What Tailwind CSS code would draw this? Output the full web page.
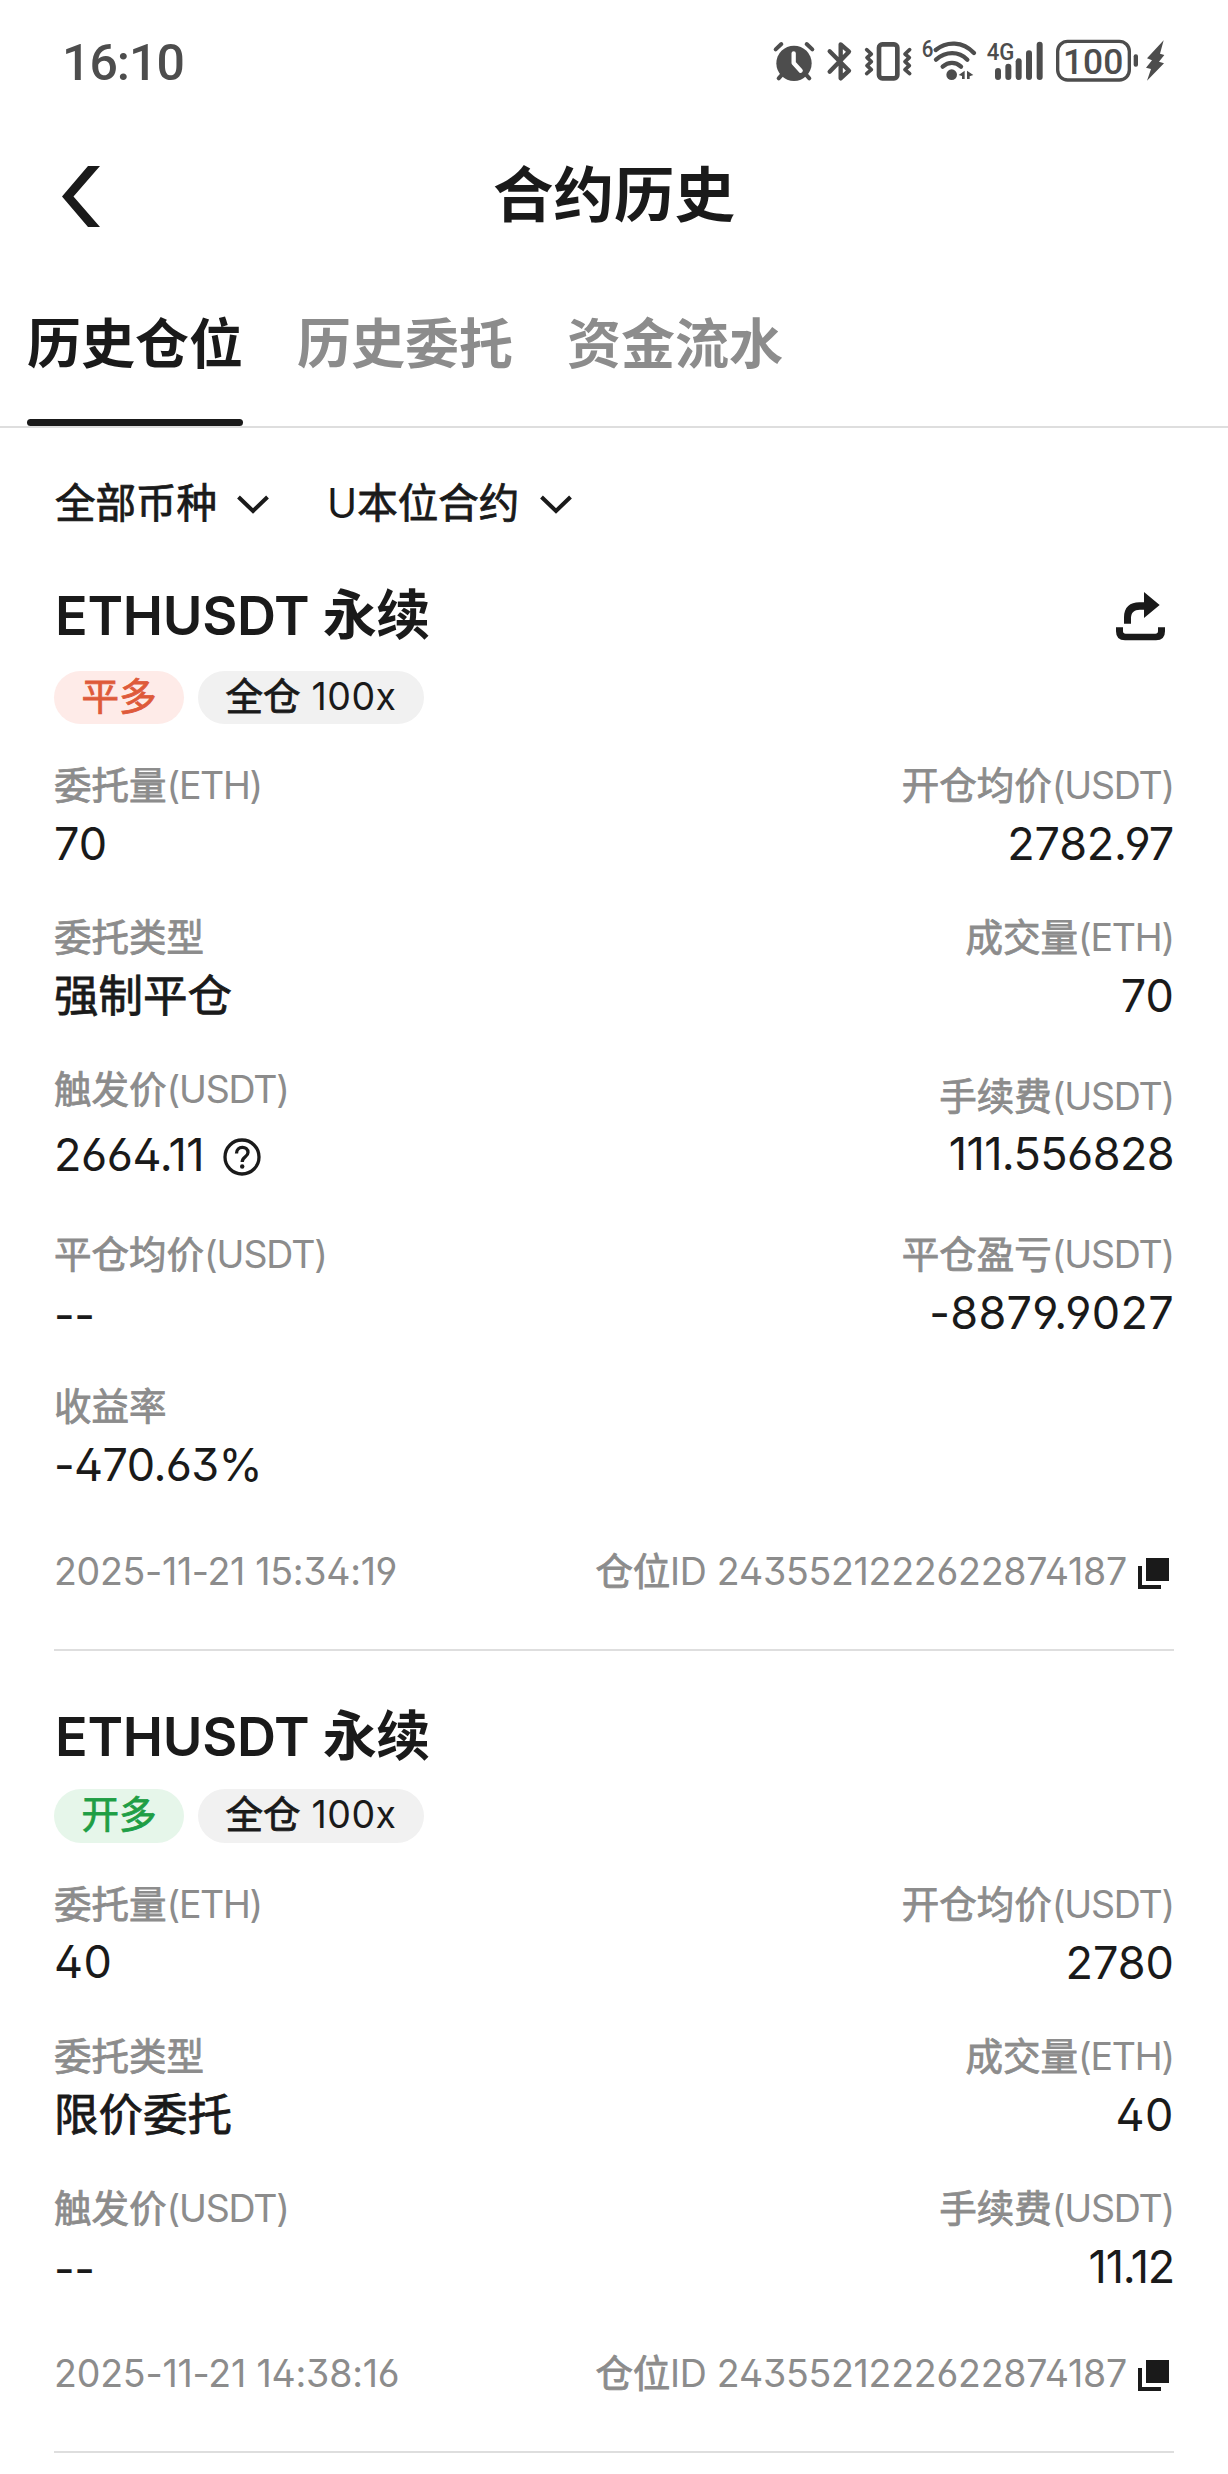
<!DOCTYPE html>
<html lang="zh-CN">
<head>
  <meta charset="UTF-8">
  <meta name="viewport" content="width=device-width, initial-scale=1.0">
  <title>合约历史</title>
  <script src="https://cdn.jsdelivr.net/npm/@tailwindcss/browser@4"></script>
</head>
<body class="bg-white text-[#1a1a1a] font-['Inter','Noto_Sans_CJK_SC',sans-serif] [font-feature-settings:'ss01']">

  <!-- Status bar -->
  <div class="h-[124px] flex items-center justify-between pl-[62px] pr-[48px] text-[#4d4d4d]">
    <div class="pt-[2px] font-[Roboto] font-medium text-[50px] leading-[60px] tracking-[-1px]">16:10</div>
    <svg class="w-[420px] h-[75px]" viewBox="0 0 1260 225" fill="currentColor">
      <!-- alarm -->
      <circle cx="102" cy="115" r="53"/>
      <path d="M47 73L64 57M140 57L157 73M66 149L56 160M138 149L148 160" fill="none" stroke="currentColor" stroke-width="12" stroke-linecap="round"/>
      <path d="M101 85V114L122 137" fill="none" stroke="#fff" stroke-width="13" stroke-linecap="round" stroke-linejoin="round"/>
      <!-- bluetooth -->
      <path d="M209 79L267 137L242 160V58L267 80L209 140" fill="none" stroke="currentColor" stroke-width="13" stroke-linecap="round" stroke-linejoin="round"/>
      <!-- vibrate -->
      <rect x="357" y="58" width="55" height="102" rx="10" fill="none" stroke="currentColor" stroke-width="14"/>
      <path d="M320 74L334 87L321 98L334 110L321 122L334 134L320 146M449 74L435 87L448 98L435 110L448 122L435 134L449 146" fill="none" stroke="currentColor" stroke-width="11" stroke-linecap="round" stroke-linejoin="round"/>
      <!-- wifi -->
      <text x="485" y="97" font-family="Roboto" font-size="70" font-weight="500" textLength="35" lengthAdjust="spacingAndGlyphs">6</text>
      <path d="M527 75C560 48 608 48 642 84M528 104C558 78 596 78 622 104M548 125C565 110 587 110 603 125" fill="none" stroke="currentColor" stroke-width="13" stroke-linecap="round"/>
      <circle cx="575" cy="149" r="16"/>
      <path d="M596 150L614 137V162H606V153ZM621 137L640 150L629 154V162H621Z"/>
      <!-- cellular -->
      <text x="680" y="104" font-family="Roboto" font-size="74" font-weight="500" textLength="83" lengthAdjust="spacingAndGlyphs">4G</text>
      <rect x="705" y="129" width="18" height="36" rx="9"/>
      <rect x="736" y="116" width="18" height="49" rx="9"/>
      <rect x="767" y="100" width="18" height="65" rx="9"/>
      <rect x="798" y="76" width="18" height="89" rx="9"/>
      <rect x="830" y="50" width="18" height="115" rx="9"/>
      <!-- battery -->
      <rect x="893" y="49" width="215" height="116" rx="30" fill="none" stroke="currentColor" stroke-width="10"/>
      <text x="909" y="146" font-family="Roboto" font-size="106" font-weight="500" textLength="181" lengthAdjust="spacingAndGlyphs">100</text>
      <rect x="1121" y="88" width="13" height="37" rx="6"/>
      <path d="M1211 46L1161 100L1176 106L1158 128L1173 132L1161 167L1212 115L1197 110L1213 90L1200 86Z"/>
    </svg>
  </div>

  <!-- Header -->
  <div class="h-[142px] grid grid-cols-3 items-center px-[62px]">
    <svg class="w-[38px] h-[61px] mt-[2px]" viewBox="0 0 38 61" fill="currentColor"><path d="M26 0H38L11.500 30.500L38 61H26L0 30.500Z"/></svg>
    <h1 class="text-center text-[60.500px] leading-[72px] font-bold">合约历史</h1>
  </div>

  <!-- Tabs -->
  <div class="h-[162px] flex gap-[54px] px-[27px] border-b-2 border-[#dedede] text-[54px] leading-[64px] font-bold text-[#8c8c8c]">
    <div class="h-[160px] flex flex-col justify-between pt-[47px] text-[#1a1a1a]">
      <span>历史仓位</span>
      <span class="h-[7px] rounded-full bg-[#1a1a1a]"></span>
    </div>
    <div class="pt-[47px]">历史委托</div>
    <div class="pt-[47px]">资金流水</div>
  </div>

  <!-- Filters -->
  <div class="mt-[46px] h-[60px] flex items-center px-[55px] text-[40.500px] leading-[60px]">
    <span class="[-webkit-text-stroke:0.8px]">全部币种</span>
    <svg class="ml-[20px] mt-[2px] w-[32px] h-[20px]" viewBox="0 0 32 20" fill="none" stroke="currentColor" stroke-width="4"><path d="M1.500 2L16 16L30.500 2"/></svg>
    <span class="ml-[58px]">U<span class="[-webkit-text-stroke:0.8px]">本位合约</span></span>
    <svg class="ml-[21px] mt-[2px] w-[32px] h-[20px]" viewBox="0 0 32 20" fill="none" stroke="currentColor" stroke-width="4"><path d="M1.500 2L16 16L30.500 2"/></svg>
  </div>

  <!-- Position 1 -->
  <div class="mx-[54px] mt-[50px] border-b-2 border-[#dedede] pb-[51px]">
    <div class="flex items-center justify-between pl-px pr-[9px]">
      <h2 class="text-[54px] leading-[64px] font-semibold tracking-[-0.3px]">ETHUSDT 永续</h2>
      <svg class="w-[49px] h-[49px] mt-px" viewBox="0 0 147 147" fill="currentColor">
        <path d="M84 0L131 39L84 78V53H72C54 53 45 62 45 78V95H24V76C24 46 42 31 70 31H84Z"/>
        <path d="M0 106H21V117Q21 125 29 125H118Q126 125 126 117V106H147V118Q147 145 120 145H27Q0 145 0 118Z"/>
      </svg>
    </div>
    <div class="flex gap-[14px] mt-[23px] text-[37.500px] leading-[52px]">
      <span class="w-[130px] h-[53px] rounded-full bg-[#feebe8] text-[#de5a3a] text-center [-webkit-text-stroke:0.8px]">平多</span>
      <span class="w-[226px] h-[53px] rounded-full bg-[#f1f1f1] text-center tracking-[0.5px]"><span class="[-webkit-text-stroke:0.8px] tracking-normal">全仓</span> 100x</span>
    </div>

    <div class="mt-[36px] grid grid-cols-2 gap-y-[36px]">
      <div>
        <div class="text-[37.500px] leading-[52px] tracking-[-1.3px] text-[#8c8c8c]"><span class="[-webkit-text-stroke:0.8px] tracking-normal">委托量</span>(ETH)</div>
        <div class="text-[45px] leading-[64px]">70</div>
      </div>
      <div class="text-right">
        <div class="text-[37.500px] leading-[52px] tracking-[-1.2px] text-[#8c8c8c]"><span class="[-webkit-text-stroke:0.8px] tracking-normal">开仓均价</span>(USDT)</div>
        <div class="text-[45px] leading-[64px] tracking-[-0.2px]">2782.97</div>
      </div>

      <div>
        <div class="text-[37.500px] leading-[52px] text-[#8c8c8c] [-webkit-text-stroke:0.8px]">委托类型</div>
        <div class="text-[44.500px] leading-[64px] [-webkit-text-stroke:0.8px]">强制平仓</div>
      </div>
      <div class="text-right">
        <div class="text-[37.500px] leading-[52px] tracking-[-1.2px] text-[#8c8c8c]"><span class="[-webkit-text-stroke:0.8px] tracking-normal">成交量</span>(ETH)</div>
        <div class="text-[45px] leading-[64px]">70</div>
      </div>

      <div>
        <div class="text-[37.500px] leading-[52px] tracking-[-1.2px] text-[#8c8c8c]"><span class="[-webkit-text-stroke:0.8px] tracking-normal">触发价</span>(USDT)</div>
        <div class="flex items-center gap-[19px] text-[45px] leading-[77px] tracking-[-0.4px]">
          2664.11
          <svg class="w-[38px] h-[38px] mt-[5px]" viewBox="0 0 38 38" fill="none" stroke="currentColor" stroke-width="3.300">
            <circle cx="19" cy="19" r="17"/>
            <path d="M13.500 15.500C13.500 7.500 25 7.500 25 14.500C25 19 19.200 18.500 19.200 24"/>
            <circle cx="19.200" cy="28.500" r="2.200" fill="currentColor" stroke="none"/>
          </svg>
        </div>
      </div>
      <div class="text-right pt-[7px]">
        <div class="text-[37.500px] leading-[52px] tracking-[-1.2px] text-[#8c8c8c]"><span class="[-webkit-text-stroke:0.8px] tracking-normal">手续费</span>(USDT)</div>
        <div class="text-[45px] leading-[62px] tracking-[-0.6px]">111.556828</div>
      </div>

      <div>
        <div class="text-[37.500px] leading-[52px] tracking-[-1.1px] text-[#8c8c8c]"><span class="[-webkit-text-stroke:0.8px] tracking-normal">平仓均价</span>(USDT)</div>
        <div class="h-[64px] pt-[2px] text-[45px] leading-[64px] tracking-[-0.5px]">--</div>
      </div>
      <div class="text-right">
        <div class="text-[37.500px] leading-[52px] tracking-[-1.2px] text-[#8c8c8c]"><span class="[-webkit-text-stroke:0.8px] tracking-normal">平仓盈亏</span>(USDT)</div>
        <div class="text-[45px] leading-[64px] tracking-[0.3px]">-8879.9027</div>
      </div>

      <div>
        <div class="text-[37.500px] leading-[52px] text-[#8c8c8c] [-webkit-text-stroke:0.8px]">收益率</div>
        <div class="text-[45px] leading-[64px] tracking-[-0.6px]">-470.63%</div>
      </div>
    </div>

    <div class="mt-[49px] flex items-center justify-between text-[37.500px] leading-[52px] text-[#8c8c8c]">
      <span class="tracking-[-0.3px]">2025-11-21 15:34:19</span>
      <span class="flex items-center gap-[11px] pr-[5px]">
        <span class="tracking-[-0.25px]"><span class="[-webkit-text-stroke:0.8px]">仓位</span>ID 2435521222622874187</span>
        <svg class="w-[31px] h-[31px] mt-[2px] text-[#1a1a1a]" viewBox="0 0 31 31" fill="currentColor"><path d="M8 0H31V23H8ZM0 8H4V27H23V31H0Z"/></svg>
      </span>
    </div>
  </div>

  <!-- Position 2 -->
  <div class="mx-[54px] mt-[54px] border-b-2 border-[#dedede] pb-[51px]">
    <h2 class="pl-px text-[54px] leading-[64px] font-semibold tracking-[-0.3px]">ETHUSDT 永续</h2>
    <div class="flex gap-[14px] mt-[20px] text-[37.500px] leading-[52px]">
      <span class="w-[130px] h-[54px] rounded-full bg-[#e6f6ea] text-[#1f9e45] text-center [-webkit-text-stroke:0.8px]">开多</span>
      <span class="w-[226px] h-[54px] rounded-full bg-[#f1f1f1] text-center tracking-[0.5px]"><span class="[-webkit-text-stroke:0.8px] tracking-normal">全仓</span> 100x</span>
    </div>

    <div class="mt-[36px] grid grid-cols-2 gap-y-[36px]">
      <div>
        <div class="text-[37.500px] leading-[52px] tracking-[-1.3px] text-[#8c8c8c]"><span class="[-webkit-text-stroke:0.8px] tracking-normal">委托量</span>(ETH)</div>
        <div class="text-[45px] leading-[62px] tracking-[0.5px]">40</div>
      </div>
      <div class="text-right">
        <div class="text-[37.500px] leading-[52px] tracking-[-1.2px] text-[#8c8c8c]"><span class="[-webkit-text-stroke:0.8px] tracking-normal">开仓均价</span>(USDT)</div>
        <div class="text-[45px] leading-[64px]">2780</div>
      </div>

      <div>
        <div class="text-[37.500px] leading-[52px] text-[#8c8c8c] [-webkit-text-stroke:0.8px]">委托类型</div>
        <div class="text-[44.500px] leading-[64px] [-webkit-text-stroke:0.8px]">限价委托</div>
      </div>
      <div class="text-right">
        <div class="text-[37.500px] leading-[52px] tracking-[-1.2px] text-[#8c8c8c]"><span class="[-webkit-text-stroke:0.8px] tracking-normal">成交量</span>(ETH)</div>
        <div class="text-[45px] leading-[64px] tracking-[0.5px]">40</div>
      </div>

      <div>
        <div class="text-[37.500px] leading-[52px] tracking-[-1.2px] text-[#8c8c8c]"><span class="[-webkit-text-stroke:0.8px] tracking-normal">触发价</span>(USDT)</div>
        <div class="h-[64px] pt-[2px] text-[45px] leading-[64px] tracking-[-0.5px]">--</div>
      </div>
      <div class="text-right">
        <div class="text-[37.500px] leading-[52px] tracking-[-1.2px] text-[#8c8c8c]"><span class="[-webkit-text-stroke:0.8px] tracking-normal">手续费</span>(USDT)</div>
        <div class="text-[45px] leading-[64px] tracking-[-1.2px]">11.12</div>
      </div>
    </div>

    <div class="mt-[49px] flex items-center justify-between text-[37.500px] leading-[52px] text-[#8c8c8c]">
      <span class="tracking-[-0.2px]">2025-11-21 14:38:16</span>
      <span class="flex items-center gap-[11px] pr-[5px]">
        <span class="tracking-[-0.25px]"><span class="[-webkit-text-stroke:0.8px]">仓位</span>ID 2435521222622874187</span>
        <svg class="w-[31px] h-[31px] mt-[2px] text-[#1a1a1a]" viewBox="0 0 31 31" fill="currentColor"><path d="M8 0H31V23H8ZM0 8H4V27H23V31H0Z"/></svg>
      </span>
    </div>
  </div>
</body>
</html>
